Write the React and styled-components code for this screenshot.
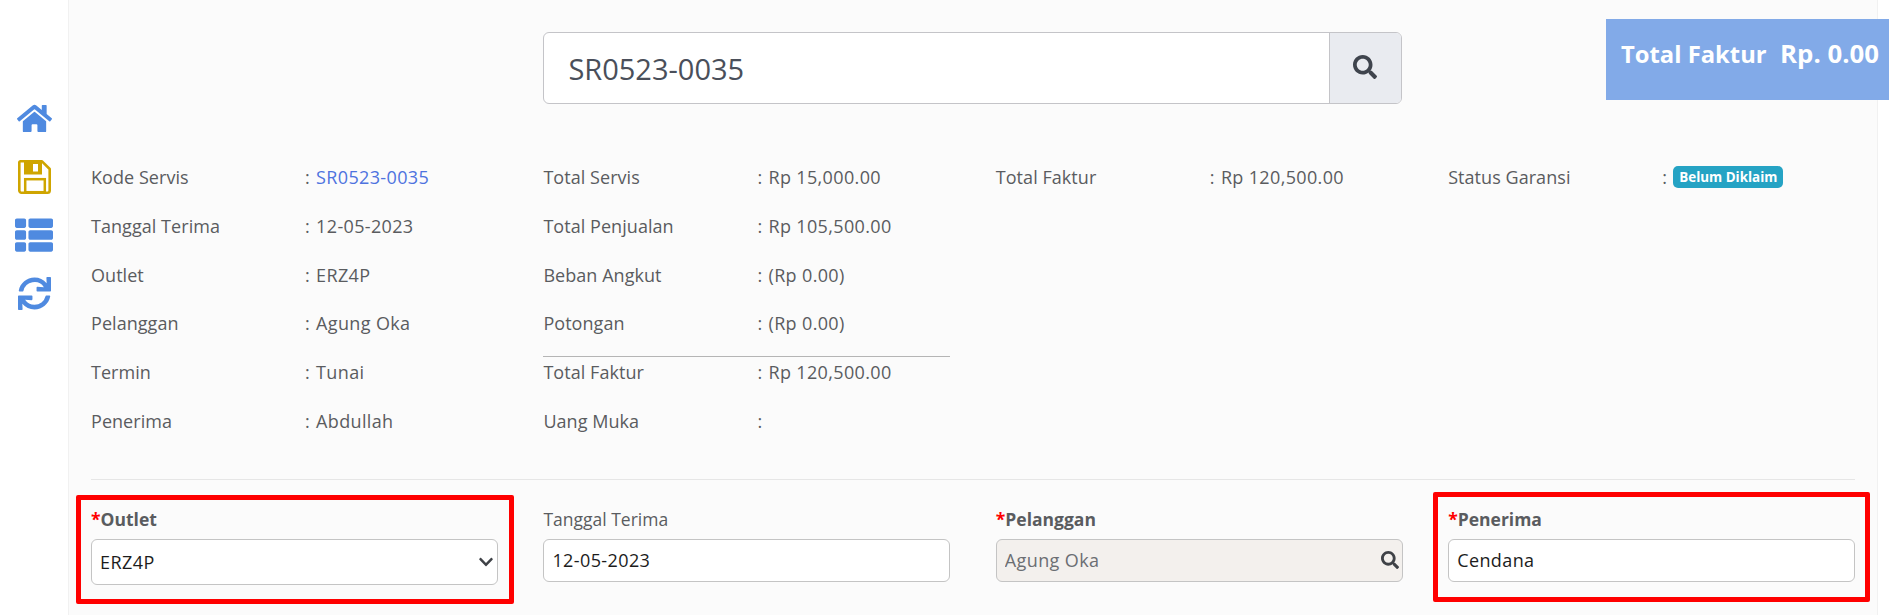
import React from "react";
import styled, { createGlobalStyle } from "styled-components";
import { FaHome, FaThList, FaSync, FaSearch, FaChevronDown } from "react-icons/fa";

const Global = createGlobalStyle`
  html, body { margin: 0; padding: 0; height: 100%; background: #fff; overflow: hidden; }
  body { font-family: "Open Sans", "Noto Sans", sans-serif; color: #5a5c5f; }
  * { box-sizing: border-box; }
`;

const Page = styled.div`
  position: relative;
  display: flex;
  height: 615px;
  width: 1889px;
  background: #fff;
`;

const Sidebar = styled.nav`
  width: 68px;
  flex: none;
  display: flex;
  flex-direction: column;
  align-items: center;
  padding-top: 101px;
`;

const IconButton = styled.span`
  display: flex;
  height: ${(p) => p.$h}px;
  margin-bottom: ${(p) => p.$gap}px;
  align-items: center;
  justify-content: center;
  color: ${(p) => p.$color || "#4f8ae0"};
`;

const Main = styled.main`
  flex: 1;
  background: #fbfbfb;
  border-left: 1px solid #f1f1f1;
  border-right: 1px solid #f1f1f1;
  margin-right: 11px;
  padding: 32px 22px 0 22px;
`;

const Columns = styled.div`
  display: grid;
  grid-template-columns: repeat(4, 407px);
  column-gap: 45.4px;
`;

const SearchBar = styled.div`
  grid-column: 2 / 4;
  display: flex;
  height: 72px;
  width: 859px;
  border: 1px solid #c4c4c8;
  border-radius: 6px;
  overflow: hidden;
  background: #fff;
`;

const SearchInput = styled.input`
  flex: 1;
  min-width: 0;
  border: 0;
  outline: 0;
  padding: 0 24px;
  font: 400 29px "Open Sans", sans-serif;
  color: #4a4f5a;
  background: transparent;
`;

const SearchButton = styled.button`
  width: 72px;
  border: 0;
  border-left: 1px solid #c4c4c8;
  background: #e9ebf0;
  color: #3f444d;
  display: flex;
  align-items: center;
  justify-content: center;
  padding: 0 1px 3px 0;
  font-size: 24px;
`;

const TotalBadge = styled.div`
  position: absolute;
  top: 19px;
  left: 1606px;
  width: 283px;
  height: 81px;
  padding: 17px 0 0 15px;
  background: #82aae8;
  color: #fff;
  font-weight: 700;
  line-height: 34px;
  white-space: pre;
`;

const TotalLabel = styled.span`
  font-size: 23.8px;
`;

const TotalAmount = styled.span`
  font-size: 25.8px;
`;

const InfoGrid = styled(Columns)`
  margin-top: 61px;
`;

const InfoColumn = styled.div`
  display: flex;
  flex-direction: column;
`;

const InfoRow = styled.div`
  display: grid;
  grid-template-columns: 214px 1fr;
  height: 24px;
  margin-bottom: 24.8px;
  font-size: 18px;
  letter-spacing: 0.05px;
  line-height: 24px;
  white-space: nowrap;
`;

const InfoValue = styled.div`
  display: flex;
  align-items: center;
  gap: 6px;
  letter-spacing: 0.35px;
`;

const CodeLink = styled.a`
  color: #4e73df;
  text-decoration: none;
`;

const RowRule = styled.hr`
  height: 1px;
  margin: -4px 0 3px;
  border: 0;
  background: #b5b5b5;
`;

const StatusPill = styled.span`
  display: inline-block;
  height: 22px;
  padding: 0 6px;
  border-radius: 5px;
  background: #25a3c4;
  color: #fff;
  font-weight: 700;
  font-size: 13.4px;
  letter-spacing: 0;
  line-height: 22px;
`;

const SectionRule = styled.hr`
  height: 1px;
  margin: 21px 0 27px;
  border: 0;
  background: #e6e6e6;
`;

const Field = styled.div`
  position: relative;
`;

const FieldLabel = styled.label`
  display: block;
  height: 24px;
  margin-bottom: 8px;
  font-size: 17.5px;
  line-height: 24px;
  font-weight: ${(p) => (p.$required ? 700 : 400)};
`;

const Star = styled.span`
  color: #f00;
`;

const Control = styled.div`
  position: relative;
  display: flex;
  align-items: center;
  height: ${(p) => p.$h || 43}px;
  background: ${(p) => p.$bg || "#fff"};
  border: 1px solid #c4c4c4;
  border-radius: 6px;
`;

const ControlInput = styled.input`
  flex: 1;
  min-width: 0;
  height: 100%;
  border: 0;
  outline: 0;
  padding: 0 8px;
  background: transparent;
  font: 400 18px "Open Sans", sans-serif;
  letter-spacing: 0.4px;
  color: ${(p) => (p.$muted ? "#6b6e73" : "#1c1c1c")};
`;

const ControlSelect = styled.select`
  appearance: none;
  flex: 1;
  height: 100%;
  border: 0;
  outline: 0;
  padding: 0 8px;
  background: transparent;
  font: 400 18px "Open Sans", sans-serif;
  letter-spacing: 0.45px;
  color: #1c1c1c;
`;

const ControlIcon = styled.span`
  position: absolute;
  right: ${(p) => p.$right}px;
  top: 50%;
  transform: translateY(-50%);
  display: flex;
  color: #3f4247;
  font-size: ${(p) => p.$size}px;
  pointer-events: none;
`;

const Highlight = styled.div`
  position: absolute;
  top: ${(p) => p.$top}px;
  bottom: ${(p) => p.$bottom}px;
  left: ${(p) => p.$left}px;
  right: ${(p) => p.$right}px;
  border: 5px solid #f00;
  border-radius: 2px;
  pointer-events: none;
`;

const SaveIcon = () => (
  <svg width="33" height="34" viewBox="0 0 33 34" fill="none">
    <path d="M2.5 1.3H24L31.7 9V30.5a2.2 2.2 0 0 1-2.2 2.2H3.5a2.2 2.2 0 0 1-2.2-2.2V2.5a1.2 1.2 0 0 1 1.2-1.2Z" stroke="currentColor" strokeWidth="2.6" strokeLinejoin="round" />
    <path fillRule="evenodd" fill="currentColor" d="M6 1h18v13.5H6ZM15 4v7.5h5V4Z" />
    <rect x="7.2" y="19.2" width="19.6" height="13" stroke="currentColor" strokeWidth="2.5" />
  </svg>
);

const columns = [
  [
    ["Kode Servis", <CodeLink href="#">SR0523-0035</CodeLink>],
    ["Tanggal Terima", "12-05-2023"],
    ["Outlet", "ERZ4P"],
    ["Pelanggan", "Agung Oka"],
    ["Termin", "Tunai"],
    ["Penerima", "Abdullah"],
  ],
  [
    ["Total Servis", "Rp 15,000.00"],
    ["Total Penjualan", "Rp 105,500.00"],
    ["Beban Angkut", "(Rp 0.00)"],
    ["Potongan", "(Rp 0.00)"],
    ["Total Faktur", "Rp 120,500.00", true],
    ["Uang Muka", ""],
  ],
  [["Total Faktur", "Rp 120,500.00"]],
  [["Status Garansi", <StatusPill>Belum Diklaim</StatusPill>]],
];

export default function App() {
  return (
    <Page>
      <Global />
      <Sidebar>
        <IconButton $h={34} $gap={25}><FaHome size={35} /></IconButton>
        <IconButton $h={34} $gap={24} $color="#cfa500"><SaveIcon /></IconButton>
        <IconButton $h={34} $gap={24}><FaThList size={38} /></IconButton>
        <IconButton $h={34} $gap={0}><FaSync size={33} /></IconButton>
      </Sidebar>
      <Main>
        <Columns>
          <SearchBar>
            <SearchInput readOnly value="SR0523-0035" />
            <SearchButton aria-label="Cari"><FaSearch /></SearchButton>
          </SearchBar>
        </Columns>
        <InfoGrid>
          {columns.map((rows, c) => (
            <InfoColumn key={c}>
              {rows.map(([label, value, ruled]) => (
                <React.Fragment key={label}>
                  {ruled && <RowRule />}
                  <InfoRow>
                    <span>{label}</span>
                    <InfoValue><span>:</span>{value}</InfoValue>
                  </InfoRow>
                </React.Fragment>
              ))}
            </InfoColumn>
          ))}
        </InfoGrid>
        <SectionRule />
        <Columns>
          <Field>
            <FieldLabel $required><Star>*</Star>Outlet</FieldLabel>
            <Control $h={46}>
              <ControlSelect defaultValue="ERZ4P"><option>ERZ4P</option></ControlSelect>
              <ControlIcon $right={3} $size={16}><FaChevronDown /></ControlIcon>
            </Control>
            <Highlight $top={-12} $bottom={-19} $left={-15} $right={-16} />
          </Field>
          <Field>
            <FieldLabel>Tanggal Terima</FieldLabel>
            <Control>
              <ControlInput readOnly value="12-05-2023" />
            </Control>
          </Field>
          <Field>
            <FieldLabel $required><Star>*</Star>Pelanggan</FieldLabel>
            <Control $bg="#f3f0ed">
              <ControlInput $muted readOnly value="Agung Oka" />
              <ControlIcon $right={3} $size={18}><FaSearch /></ControlIcon>
            </Control>
          </Field>
          <Field>
            <FieldLabel $required><Star>*</Star>Penerima</FieldLabel>
            <Control>
              <ControlInput readOnly value="Cendana" />
            </Control>
            <Highlight $top={-15} $bottom={-17} $left={-15} $right={-15} />
          </Field>
        </Columns>
      </Main>
      <TotalBadge><TotalLabel>Total Faktur</TotalLabel><TotalAmount>{"  Rp. 0.00"}</TotalAmount></TotalBadge>
    </Page>
  );
}
